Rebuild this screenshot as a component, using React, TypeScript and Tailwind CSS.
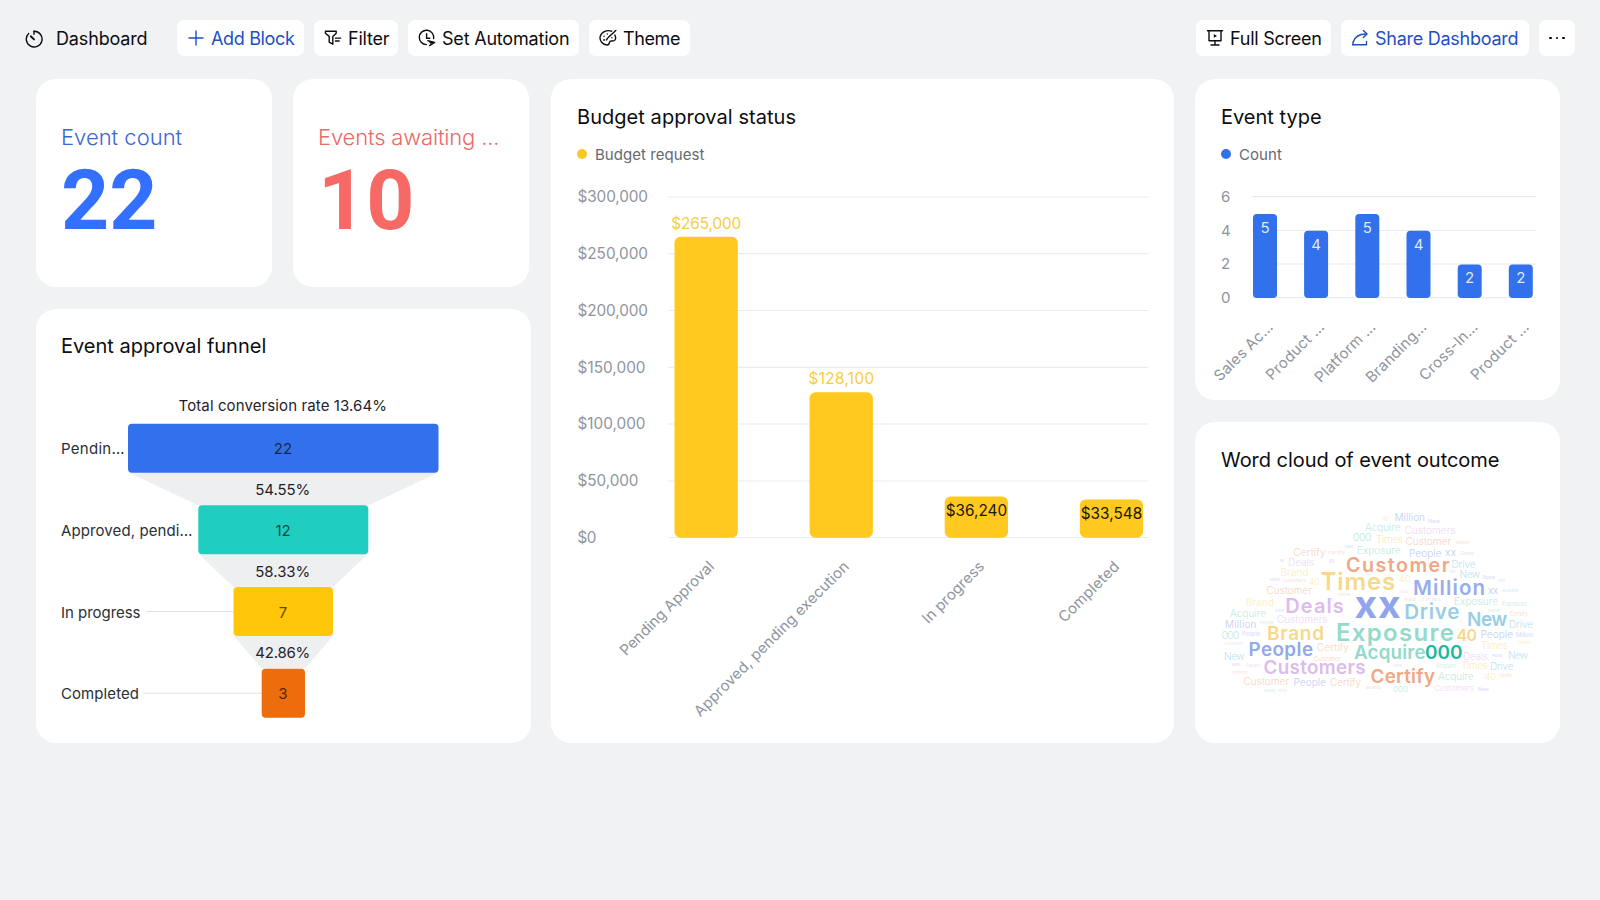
import type { ReactNode } from "react";

type IconProps = { children: ReactNode; className?: string };

function Icon({ children, className = "" }: IconProps) {
  return (
    <svg
      viewBox="0 0 18 18"
      className={`h-[18px] w-[18px] shrink-0 ${className}`}
      fill="none"
      stroke="currentColor"
      strokeWidth="1.4"
      strokeLinecap="round"
      strokeLinejoin="round"
    >
      {children}
    </svg>
  );
}

function DashboardIcon() {
  return (
    <Icon>
      <path d="M9 1.2A7.9 7.9 0 1 1 3.7 3.4" />
      <path d="M9 1.2v3" />
      <path d="M5.8 6.3 9 9.4" strokeWidth="1.9" />
    </Icon>
  );
}

function PlusIcon() {
  return (
    <Icon>
      <path d="M9 2v14M2 9h14" />
    </Icon>
  );
}

function FilterIcon() {
  return (
    <Icon>
      <path d="M1.4 2.2h10.8v2L8.800 7.400v7.800l-3.600-2V7.400L1.400 4.200z" />
      <path d="M11.400 9.200h5.200M11.400 12h3.800" strokeWidth="1.3" />
    </Icon>
  );
}

function AutomationIcon() {
  return (
    <Icon>
      <path d="M8.4 15.6A7.2 7.2 0 1 1 15.6 9.6" />
      <path d="M8.6 4.8v4.4h3.2" />
      <path d="M9.8 11.600l6.800 1.800-5 3.200" />
      <path d="M10 11.4l6.2 2.2-3.600 1.400z" fill="currentColor" stroke="none" />
    </Icon>
  );
}

function ThemeIcon() {
  return (
    <Icon>
      <path d="M12.6 2.2C8.2.6 2.6 2.6 1.2 7.4c-1 4.4 2.4 8.4 7 8.6 1.8 0 2-1.2 2.2-2.4.2-1.4 1.4-1.8 2.8-1.6 2.4.2 3.6-1.4 3.4-3.4-.1-1-.3-1.8-.7-2.5" />
      <path d="M16.8 1.4 9.2 8.6M8.6 9.200l-1.200 1.800" />
      <circle cx="5" cy="7.2" r=".7" fill="currentColor" stroke="none" />
      <circle cx="8.3" cy="5" r=".7" fill="currentColor" stroke="none" />
      <circle cx="5" cy="11" r=".9" fill="currentColor" stroke="none" />
      <circle cx="12.9" cy="8.8" r=".7" fill="currentColor" stroke="none" />
    </Icon>
  );
}

function ScreenIcon() {
  return (
    <Icon>
      <path d="M1.4 1.7h15.2" />
      <path d="M3 1.7v10h12v-10" />
      <path d="M9 11.7v4.2M5 16h8" />
      <path d="M7.8 5v3.8l3.2-1.9z" fill="currentColor" stroke="none" />
    </Icon>
  );
}

function ShareIcon() {
  return (
    <Icon>
      <path d="M12.400 1.400l3.600 3.600-3.600 3.600" />
      <path d="M15.600 5C9 4.800 4 7.500 2.200 13" />
      <path d="M1.800 15.800h13.700v-3.400" />
      <path d="M2.200 13l-.4 2.800" />
    </Icon>
  );
}

function ToolbarButton({ icon, label, className = "" }: { icon: ReactNode; label: string; className?: string }) {
  return (
    <button
      className={`flex h-[36px] items-center gap-[6px] rounded-[7px] bg-white pl-[10px] text-lg leading-none whitespace-nowrap ${className}`}
    >
      {icon}
      <span className="pt-px">{label}</span>
    </button>
  );
}

function Toolbar() {
  return (
    <header className="flex h-[79px] items-start pt-[20px] pl-[25px]">
      <div className="flex h-[36px] w-[152px] items-center gap-[13px] pt-px text-lg leading-none tracking-[-0.15px]">
        <DashboardIcon />
        <span>Dashboard</span>
      </div>
      <div className="flex gap-[10px]">
        <ToolbarButton icon={<PlusIcon />} label="Add Block" className="w-[127px] gap-[5px] tracking-[-0.34px] text-[#1d4fc4]" />
        <ToolbarButton icon={<FilterIcon />} label="Filter" className="w-[84px] gap-[5px] tracking-[-0.2px]" />
        <ToolbarButton icon={<AutomationIcon />} label="Set Automation" className="w-[171px] tracking-[-0.2px]" />
        <ToolbarButton icon={<ThemeIcon />} label="Theme" className="w-[101px] gap-[5px] tracking-[-0.4px]" />
      </div>
      <div className="mr-[25px] ml-auto flex gap-[10px]">
        <ToolbarButton icon={<ScreenIcon />} label="Full Screen" className="w-[135px] gap-[5px] tracking-[-0.26px]" />
        <ToolbarButton icon={<ShareIcon />} label="Share Dashboard" className="w-[188px] tracking-[-0.26px] text-[#1d4fc4]" />
        <button className="flex h-[36px] w-[36px] items-center justify-center gap-[4px] rounded-[7px] bg-white">
          <span className="size-[2.5px] rounded-full bg-black" />
          <span className="size-[2.5px] rounded-full bg-black" />
          <span className="size-[2.5px] rounded-full bg-black" />
        </button>
      </div>
    </header>
  );
}

function Card({ title, className = "", children }: { title: string; className?: string; children: ReactNode }) {
  return (
    <section className={`flex flex-col rounded-[20px] bg-white ${className}`}>
      <h2 className="h-[60px] shrink-0 pt-[25px] pl-[26px] text-xl leading-[26px]">{title}</h2>
      {children}
    </section>
  );
}

function Metric({ title, value, className = "" }: { title: string; value: string; className?: string }) {
  return (
    <section className={`h-[208px] w-[236px] rounded-[20px] bg-white pt-[43px] pl-[25px] ${className}`}>
      <div className="text-[22px] leading-[31px] font-[350]">{title}</div>
      <div className="mt-[6px] font-[Roboto] text-[84px] leading-[84px] font-bold">{value}</div>
    </section>
  );
}

const trapezoids = [
  "128.5,472.5 438.5,472.5 368,505.5 198.5,505.5",
  "198.5,554 368,554 333,587 233.5,587",
  "233.5,636 333,636 305,668.5 262,668.5",
];

const stages = [
  { label: "Pendin…", labelWidth: 63.5, value: 22, x: 128, w: 310.5, y: 423.7, fill: "#3370eb" },
  { label: "Approved, pendi…", labelWidth: 131.5, value: 12, x: 198.3, w: 170, y: 505.3, fill: "#20cebf" },
  { label: "In progress", labelWidth: 79.5, value: 7, x: 233.5, w: 99.5, y: 587, fill: "#ffc60a", line: 146 },
  { label: "Completed", labelWidth: 78, value: 3, x: 261.7, w: 43.3, y: 668.7, fill: "#ed6d0c", line: 143.5 },
];

const rates = [
  { text: "Total conversion rate 13.64%", y: 411.3, w: 208.5 },
  { text: "54.55%", y: 495.3, w: 55 },
  { text: "58.33%", y: 576.6, w: 55 },
  { text: "42.86%", y: 658.3, w: 55 },
];

function FunnelChart() {
  return (
    <svg viewBox="36 369 495 374" className="h-[374px] w-[495px]" fontSize="15">
      {trapezoids.map((points) => (
        <polygon key={points} points={points} fill="#eeeff1" />
      ))}
      {stages.map((s) => (
        <g key={s.label}>
          {s.line && <line x1={s.line} x2={s.x} y1={s.y + 24.5} y2={s.y + 24.5} stroke="#dfe1e4" />}
          <rect x={s.x} y={s.y} width={s.w} height="49" rx="4" fill={s.fill} />
          <text x="61" y={s.y + 30.5} textLength={s.labelWidth} fill="#2b2f36">
            {s.label}
          </text>
          <text x="283" y={s.y + 30.5} textAnchor="middle" fill="#000" fillOpacity=".68">
            {s.value}
          </text>
        </g>
      ))}
      {rates.map((r) => (
        <text key={r.text} x="282.8" y={r.y} textAnchor="middle" textLength={r.w} fill="#1f2329">
          {r.text}
        </text>
      ))}
    </svg>
  );
}

function Legend({ color, label }: { color: string; label: string }) {
  return (
    <div className="flex h-[29px] items-center gap-[8px] pl-[26px] text-[15px] leading-none tracking-[0.05px] text-[#646a73]">
      <svg viewBox="0 0 10 10" className="size-[10px]">
        <circle cx="5" cy="5" r="5" fill={color} />
      </svg>
      <span className="pt-px">{label}</span>
    </div>
  );
}

const budgetTicks = [
  { label: "$300,000", y: 197, w: 70.5 },
  { label: "$250,000", y: 253.7, w: 70.5 },
  { label: "$200,000", y: 310.5, w: 70.5 },
  { label: "$150,000", y: 367.3, w: 68 },
  { label: "$100,000", y: 424, w: 68 },
  { label: "$50,000", y: 481, w: 61 },
  { label: "$0", y: 537.5, w: 19 },
];

const budgetBars = [
  { name: "Pending Approval", len: 126, value: "$265,000", w: 70, x: 674.5, top: 236.7, labelY: 228.5, fill: "#f7cd3d" },
  { name: "Approved, pending execution", len: 212, value: "$128,100", w: 65.5, x: 809.6, top: 392.2, labelY: 384, fill: "#f7cd3d" },
  { name: "In progress", len: 80.5, value: "$36,240", w: 61.5, x: 944.7, top: 496.5, labelY: 516, fill: "#1b1606" },
  { name: "Completed", len: 79, value: "$33,548", w: 61.5, x: 1079.8, top: 499.5, labelY: 519.2, fill: "#1b1606" },
];

function BudgetChart() {
  return (
    <svg viewBox="551 168 623 575" className="h-[575px] w-[623px]" fontSize="15.3">
      {budgetTicks.map((t) => (
        <g key={t.label}>
          <line x1="668" x2="1148.5" y1={t.y} y2={t.y} stroke="#ebecee" strokeWidth="1.2" />
          <text x="577.5" y={t.y + 5.4} textLength={t.w} fill="#8f959e">
            {t.label}
          </text>
        </g>
      ))}
      {budgetBars.map((b) => (
        <g key={b.name}>
          <rect x={b.x} y={b.top} width="63.3" height={537.7 - b.top} rx="6" fill="#ffc91f" />
          <text x={b.x + 31.7} y={b.labelY} textAnchor="middle" textLength={b.w} fill={b.fill}>
            {b.value}
          </text>
          <text
            transform={`translate(${b.x + 40.5} 567.5) rotate(-45)`}
            textAnchor="end"
            textLength={b.len}
            fontSize="15"
            fill="#8f959e"
          >
            {b.name}
          </text>
        </g>
      ))}
    </svg>
  );
}

const typeTicks = [
  { label: "6", y: 196.7 },
  { label: "4", y: 230.5 },
  { label: "2", y: 264 },
  { label: "0", y: 297.7 },
];

const typeBars = [
  { name: "Sales Ac…", len: 76.5, value: 5, x: 1253 },
  { name: "Product …", len: 75, value: 4, x: 1304.1 },
  { name: "Platform …", len: 78.5, value: 5, x: 1355.3 },
  { name: "Branding…", len: 78.5, value: 4, x: 1406.5 },
  { name: "Cross-In…", len: 75.5, value: 2, x: 1457.7 },
  { name: "Product …", len: 75, value: 2, x: 1508.8 },
];

function TypeChart() {
  return (
    <svg viewBox="1195 168 365 232" className="h-[232px] w-[365px]" fontSize="15">
      {typeTicks.map((t) => (
        <g key={t.label}>
          <line x1="1251.5" x2="1536" y1={t.y} y2={t.y} stroke="#ebecee" strokeWidth="1.2" />
          <text x="1221" y={t.y + 5.4} fill="#8f959e">
            {t.label}
          </text>
        </g>
      ))}
      {typeBars.map((b) => {
        const top = 298 - b.value * 16.8;
        return (
          <g key={b.x}>
            <rect x={b.x} y={top} width="24" height={298 - top} rx="4" fill="#3370eb" />
            <text x={b.x + 12} y={top + 19} textAnchor="middle" fill="#dfe9ff">
              {b.value}
            </text>
            <text
              transform={`translate(${b.x + 21} 328) rotate(-45)`}
              textAnchor="end"
              textLength={b.len}
              fill="#8f959e"
            >
              {b.name}
            </text>
          </g>
        );
      })}
    </svg>
  );
}

type Word = [text: string, x: number, right: number, baseline: number, size: number, color: string];

const keyWords: Word[] = [
  ["Customer", 1346, 1449.5, 571.7, 19.7, "#f0a784"],
  ["Times", 1320.5, 1395.3, 589.7, 24, "#f8d88a"],
  ["Million", 1413, 1485, 595, 20.5, "#98aeec"],
  ["Deals", 1285.3, 1343.8, 612.7, 20, "#ddbbea"],
  ["Drive", 1404.3, 1459.3, 619.3, 20.5, "#98cde6"],
  ["New", 1467, 1507.3, 625.7, 19, "#98cde6"],
  ["Exposure", 1336, 1454, 640.7, 24, "#94dacb"],
  ["40", 1456.5, 1477, 641, 16, "#f8d88a"],
  ["Brand", 1267, 1324, 640.3, 19, "#f8d88a"],
  ["People", 1248.5, 1313, 656, 18.8, "#90a8ec"],
  ["Acquire", 1354, 1425.5, 659, 18.8, "#94dacb"],
  ["000", 1425, 1462.5, 659, 19, "#1fb89c"],
  ["Customers", 1263.5, 1365.7, 674, 18.8, "#ddbbea"],
  ["Certify", 1370.5, 1435, 682.7, 18.8, "#f0a784"],
];

const O = "#f8d3bf";
const Y = "#fcebc0";
const B = "#bfccf5";
const P = "#eed9f5";
const T = "#bfeae1";
const S = "#bfe1f0";

const smallWords: Word[] = [
  ["Million", 1394.5, 1425, 520.8, 10, B],
  ["Acquire", 1365, 1400.5, 531, 10, T],
  ["Customers", 1404.5, 1455.5, 533.5, 10, P],
  ["000", 1353, 1371.5, 541, 10.5, T],
  ["Times", 1376, 1403, 543, 10, Y],
  ["Customer", 1405.5, 1451, 545, 10, O],
  ["Certify", 1293.5, 1325.5, 555.5, 10, O],
  ["Exposure", 1357, 1400.5, 554, 10, T],
  ["People", 1409, 1441.5, 556.5, 10, B],
  ["xx", 1445, 1456, 556, 10, B],
  ["Deals", 1288, 1314, 565.7, 10, P],
  ["Drive", 1451.5, 1475.5, 568, 10, S],
  ["Brand", 1280.5, 1308.5, 575.5, 10, Y],
  ["New", 1459.5, 1480, 578, 10, S],
  ["40", 1309, 1319.5, 585, 9, Y],
  ["40", 1399, 1410.5, 582, 9, Y],
  ["Customer", 1266.5, 1312, 593.5, 10, O],
  ["xx", 1488, 1498, 594, 10, B],
  ["Brand", 1246, 1274, 606, 10, Y],
  ["Exposure", 1454, 1498, 605.3, 10, T],
  ["Acquire", 1230, 1266, 616.5, 10, T],
  ["Customers", 1277, 1327.5, 623, 10, P],
  ["Million", 1225, 1256.5, 628, 10, B],
  ["Drive", 1509, 1533, 628, 10, S],
  ["000", 1221.5, 1239.5, 638.5, 10.5, T],
  ["People", 1480.5, 1513, 637.5, 10, B],
  ["Certify", 1317, 1348.7, 651, 10, O],
  ["Times", 1481, 1508, 649, 10, Y],
  ["New", 1224, 1244.5, 660, 10, S],
  ["Deals", 1463, 1488, 659.5, 10, P],
  ["New", 1508, 1528, 659, 10, S],
  ["Times", 1461, 1488, 669.3, 10, Y],
  ["Drive", 1490, 1513.5, 669.5, 10, S],
  ["Customer", 1243.5, 1289, 685, 10, O],
  ["People", 1293.5, 1326, 686, 10, B],
  ["Certify", 1330, 1361, 686, 10, O],
  ["Acquire", 1438, 1473.5, 680, 10, T],
  ["40", 1484.5, 1496, 680, 9.5, Y],
  ["000", 1393, 1408, 691.5, 8, T],
  ["Customers", 1434, 1474, 690.5, 8, P],
  ["40", 1382, 1389, 521, 6, Y],
];

const tinyWords: Word[] = [
  ["New", 1428, 1440, 522.5, 5, B],
  ["Customer", 1456, 1469, 543.5, 4, O],
  ["Certify", 1328, 1345, 554, 4, O],
  ["Drive", 1460, 1474, 555, 5, S],
  ["Deals", 1345, 1353, 547.5, 4, B],
  ["xx", 1329, 1334, 562.5, 6, B],
  ["Brand", 1280, 1284, 561.5, 4, B],
  ["Acquire", 1449, 1456, 573, 4, S],
  ["People", 1482, 1495, 579, 4.5, B],
  ["Drive", 1498, 1505, 582, 4, S],
  ["Million", 1270, 1280, 580.5, 4, B],
  ["Customers", 1283, 1306, 582, 4, O],
  ["Certify", 1323, 1335, 575.5, 4, O],
  ["Acquire", 1502, 1518, 591.5, 4, S],
  ["Customer", 1337, 1351, 596, 4, O],
  ["Deals", 1399, 1408, 593, 4, P],
  ["Certify", 1328, 1334, 600.5, 4, P],
  ["Brand", 1404, 1416, 601, 4, O],
  ["Times", 1421, 1441, 601, 5, P],
  ["Exposure", 1502, 1527, 606, 6, T],
  ["Drive", 1275, 1284, 612, 4, B],
  ["Certify", 1510, 1528, 615.5, 6, O],
  ["New", 1488, 1500, 612, 4, T],
  ["Exposure", 1260, 1274, 624, 4, T],
  ["People", 1242, 1260, 636, 5.5, B],
  ["Million", 1516, 1533, 636.5, 5.5, B],
  ["Times", 1516, 1531, 643.5, 5, Y],
  ["Customers", 1224, 1243, 645, 4, P],
  ["Customer", 1314, 1340.5, 660.5, 6, O],
  ["People", 1492, 1502, 656.5, 4, B],
  ["Acquire", 1436, 1456, 667.5, 6, T],
  ["Deals", 1246, 1260, 667, 4.5, P],
  ["Million", 1232, 1240, 665.5, 4, B],
  ["Customers", 1232, 1248, 674, 4, O],
  ["Drive", 1393, 1402, 667, 4, S],
  ["Certify", 1499, 1512, 677, 5, O],
  ["New", 1478, 1489, 691, 5, B],
  ["Exposure", 1264, 1275, 692, 4, S],
  ["People", 1278, 1287, 692, 4, P],
  ["Brand", 1366, 1381, 689, 4, O],
];

function CloudText({ word, weight }: { word: Word; weight: number }) {
  const [text, x, right, baseline, size, color] = word;
  return (
    <text
      x={x}
      y={baseline}
      fontSize={size}
      fontWeight={weight}
      textLength={right - x}
      lengthAdjust={size < 8 ? "spacingAndGlyphs" : "spacing"}
      fill={color}
    >
      {text}
    </text>
  );
}

function WordCloud() {
  return (
    <svg viewBox="1195 482 365 261" className="h-[261px] w-[365px]">
      {tinyWords.map((w, i) => (
        <CloudText key={i} word={w} weight={300} />
      ))}
      {smallWords.map((w, i) => (
        <CloudText key={i} word={w} weight={350} />
      ))}
      {keyWords.map((w, i) => (
        <CloudText key={i} word={w} weight={560} />
      ))}
      <CloudText word={["xx", 1354.5, 1400.5, 618.3, 39, "#91a5ec"]} weight={700} />
    </svg>
  );
}

export default function App() {
  return (
    <div className="h-[900px] w-[1600px] overflow-hidden bg-[#f0f2f4] font-[Inter,sans-serif] text-[#0c0d10]">
      <Toolbar />
      <main className="flex pl-[36px]">
        <div className="flex flex-col gap-[22px]">
          <div className="flex gap-[21px]">
            <Metric title="Event count" value="22" className="text-[#3370ff] [&>div:first-child]:text-[#3c66d4]" />
            <Metric
              title="Events awaiting ..."
              value="10"
              className="text-[#f76964] [&>div:first-child]:tracking-[-0.16px] [&>div:first-child]:text-[#e96a67]"
            />
          </div>
          <Card
            title="Event approval funnel"
            className="h-[434px] w-[495px] [&>h2]:pt-[24px] [&>h2]:pl-[25px]"
          >
            <FunnelChart />
          </Card>
        </div>
        <Card title="Budget approval status" className="ml-[20px] h-[664px] w-[623px] [&>h2]:tracking-[0.05px]">
          <Legend color="#f9c827" label="Budget request" />
          <BudgetChart />
        </Card>
        <div className="ml-[21px] flex flex-col gap-[22px]">
          <Card title="Event type" className="h-[321px] w-[365px]">
            <Legend color="#3370eb" label="Count" />
            <TypeChart />
          </Card>
          <Card title="Word cloud of event outcome" className="h-[321px] w-[365px] [&>h2]:tracking-[-0.03px]">
            <WordCloud />
          </Card>
        </div>
      </main>
    </div>
  );
}
